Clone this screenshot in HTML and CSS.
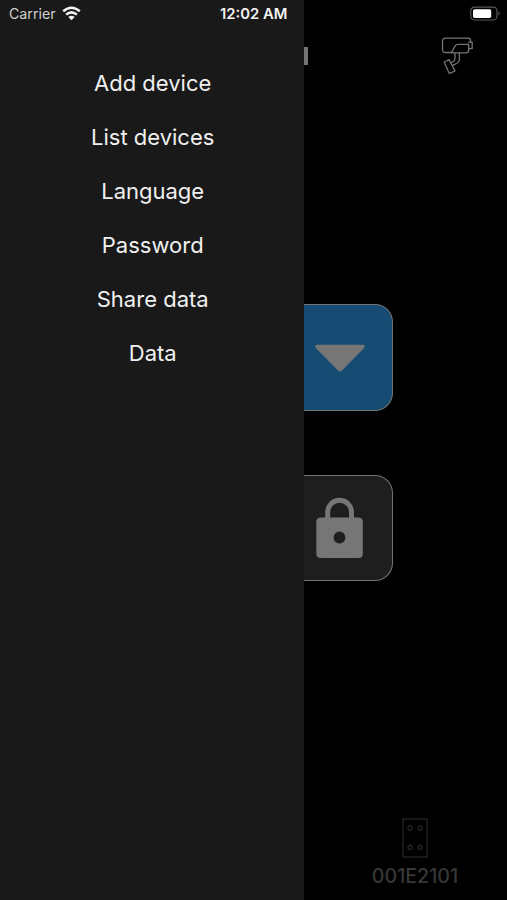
FILE: index.html
```html
<!DOCTYPE html>
<html lang="en">
<head>
<meta charset="utf-8">
<title>Remote</title>
<link rel="stylesheet" href="styles.css">
</head>
<body>
<div class="screen">
  <nav class="drawer">
    <a class="item">Add device</a>
    <a class="item">List devices</a>
    <a class="item">Language</a>
    <a class="item">Password</a>
    <a class="item">Share data</a>
    <a class="item">Data</a>
  </nav>
  <main class="remote">
    <header class="top">
      <div class="title-edge"></div>
      <svg class="camera" width="36" height="42" viewBox="0 0 36 42" fill="none" stroke="#747474" stroke-width="1.3" stroke-linejoin="round" stroke-linecap="round">
        <path d="M12 17.5H5.5Q2.5 17.5 2.5 14.5V6.5Q2.5 3.2 6 3.2H28Q30.6 3.2 30.6 5.5V7"/>
        <path d="M11.5 17.5L15 11.1Q16 9.3 18 9.3H28.6V15.5Q28.6 17.8 26 17.8H12"/>
        <path d="M28.6 7.2H32.2V13.7H28.6"/>
        <path d="M15 18V23.7Q15 25.5 12.8 26.7L11.5 27.5M19.4 18V24.5Q19.4 27 16.7 28.5L13 30.1"/>
        <path d="M4.2 27L9.2 24.7L15 35.9L10.8 38H9Z"/>
      </svg>
    </header>
    <div class="key blue">
      <svg width="50" height="28" viewBox="0 0 50 28"><path d="M2 .7H48Q50.3 .7 49.5 3Q49 4.2 47.5 5.5L27 26.4Q25 28.4 23 26.4L2 5.3Q.3 3.8.2 2.5Q.2.7 2 .7Z" fill="#767676"/></svg>
    </div>
    <div class="key dark">
      <svg width="48" height="62" viewBox="0 0 48 62"><path d="M11.7 24V15.2A11.9 11.9 0 0 1 35.5 15.2V24" fill="none" stroke="#767676" stroke-width="5"/><path fill="#767676" fill-rule="evenodd" d="M5 20.5H42.6Q46.8 20.5 46.8 25V56.5Q46.8 61 42.6 61H5Q.3 61 .3 56.5V25Q.3 20.5 5 20.5ZM23.5 34.6a5.9 5.9 0 1 0 0 11.8a5.9 5.9 0 1 0 0-11.8Z"/></svg>
    </div>
    <footer class="device">
      <svg width="28" height="40" viewBox="0 0 28 40" fill="none" stroke="#242424" stroke-width="1.3"><rect x="2" y="1" width="24" height="38"/><circle cx="9" cy="10.3" r="2.1"/><circle cx="19.2" cy="10.3" r="2.1"/><circle cx="9" cy="29.6" r="2.1"/><circle cx="19.2" cy="29.6" r="2.1"/><path d="M9 7v1.2M19.2 7v1.2M9 26.3v1.2M19.2 26.3v1.2"/></svg>
      <span>001E2101</span>
    </footer>
  </main>
  <div class="status">
    <span class="carrier">Carrier</span>
    <svg class="wifi" width="19" height="15" viewBox="0 0 19 15" fill="none" stroke="#f4f4f4" stroke-width="2.5"><path d="M1.2 5.2Q9.5-1.8 17.8 5.2M4.1 8.6Q9.5 4.2 14.9 8.6"/><path d="M6.3 11Q9.5 8.5 12.7 11L9.5 14.3Z" fill="#f4f4f4" stroke="none"/></svg>
    <span class="clock">12:02 AM</span>
    <svg class="battery" width="31" height="16" viewBox="0 0 31 16"><rect x=".8" y="1.2" width="26.2" height="12.8" rx="3.6" fill="none" stroke="#585858" stroke-width="1.2"/><rect x="3" y="3.2" width="18.2" height="8.8" rx="1.7" fill="#fff"/><path d="M28.5 5.3Q31 7.5 28.5 9.8Z" fill="#585858"/></svg>
  </div>
</div>
</body>
</html>
```
FILE: styles.css
```css
* { box-sizing: border-box; }
body { margin: 0; background: #000; font-family: Inter, "Liberation Sans", sans-serif; }
.screen { position: relative; display: flex; width: 507px; height: 900px; overflow: hidden; }
.drawer { display: flex; flex-direction: column; align-items: center; width: 304.4px; height: 900px; padding: 56.4px 0 0 1px; background: #191919; }
.item { height: 53.9px; line-height: 54px; font-size: 22px; color: #f0f0f0; white-space: nowrap; }
.remote { display: flex; flex-direction: column; flex: 1; }
.top { display: flex; justify-content: space-between; height: 304px; padding: 35px 31px 0 0; }
.title-edge { width: 3.5px; height: 18px; margin-top: 12px; background: #747474; }
.key { display: flex; align-items: center; width: 88.3px; height: 106.5px; border: 1.3px solid #747474; border-left: 0; border-radius: 0 18px 18px 0; }
.blue { background: #164b73; padding: 1px 0 0 10.6px; }
.dark { margin-top: 64px; padding: 1px 0 0 11.6px; background: #1e1e1e; }
.device { display: flex; flex-direction: column; align-items: center; width: 100px; margin: auto 0 13px 60.6px; font-size: 19.6px; font-weight: 500; line-height: 22px; color: #383838; gap: 7px; }
.status { position: absolute; inset: 0 0 auto 0; display: flex; align-items: center; height: 27px; padding: 0 6px 0 9px; }
.carrier { width: 52.5px; font-size: 14.2px; color: #cfcfcf; white-space: nowrap; }
.clock { margin-left: 139.5px; font-size: 14.8px; font-weight: 600; color: #f4f4f4; white-space: nowrap; }
.battery { margin-left: auto; }
```
